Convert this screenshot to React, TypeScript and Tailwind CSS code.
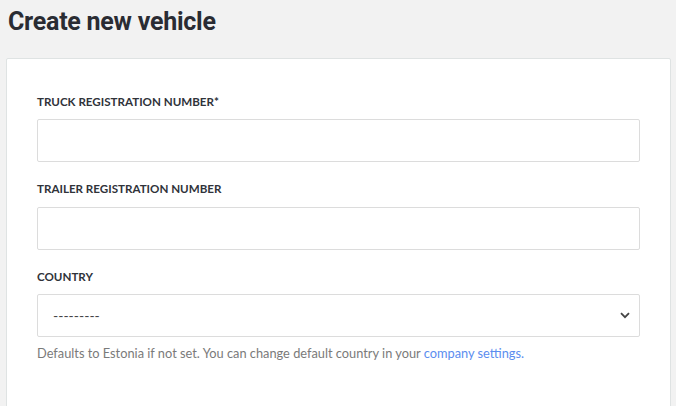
import React from 'react';

const labelCls = "block text-[11.6px] font-bold uppercase text-[#30333a]";
const inputCls = "block w-full h-[43px] border border-[#dcdcdc] rounded-[2px] bg-white px-[8px] text-[13px] outline-none";

export default function App() {
  return (
    <div className="min-h-[406px] bg-[#f2f2f2] pl-[6px] pr-[5px] overflow-hidden" style={{ fontFamily: 'Lato, sans-serif' }}>
      <h1
        className="pl-[2px] pt-[4px] h-[58px] text-[25px] font-bold text-[#2a2c33] tracking-[-0.01em] leading-[36px]"
        style={{ fontFamily: 'Roboto, sans-serif' }}
      >
        Create new vehicle
      </h1>
      <div className="bg-white border border-[#dfe3e3] rounded-t-[2px] pl-[30px] pr-[30px] pt-[34px] pb-[60px]">
        <div className="mb-[18px]">
          <label className={labelCls}>Truck registration number*</label>
          <input className={`${inputCls} mt-[9px]`} />
        </div>
        <div className="mb-[18px]">
          <label className={labelCls}>Trailer registration number</label>
          <input className={`${inputCls} mt-[9px]`} />
        </div>
        <div>
          <label className={labelCls}>Country</label>
          <div className="relative mt-[9px]">
            <select className={`${inputCls} appearance-none !px-[15px] !text-[14px] text-[#444]`} defaultValue="">
              <option value="">---------</option>
            </select>
            <svg className="absolute right-[10px] top-[18px] w-[10px] h-[7px]" viewBox="0 0 10 7">
              <path d="M1 1.2 L5 5.2 L9 1.2" fill="none" stroke="#444" strokeWidth="1.8" />
            </svg>
          </div>
          <p className="mt-[7px] text-[12.8px] text-[#7a7a7a]">
            Defaults to Estonia if not set. You can change default country in your{' '}
            <a className="text-[#5b8def]" href="#">company settings.</a>
          </p>
        </div>
      </div>
    </div>
  );
}
